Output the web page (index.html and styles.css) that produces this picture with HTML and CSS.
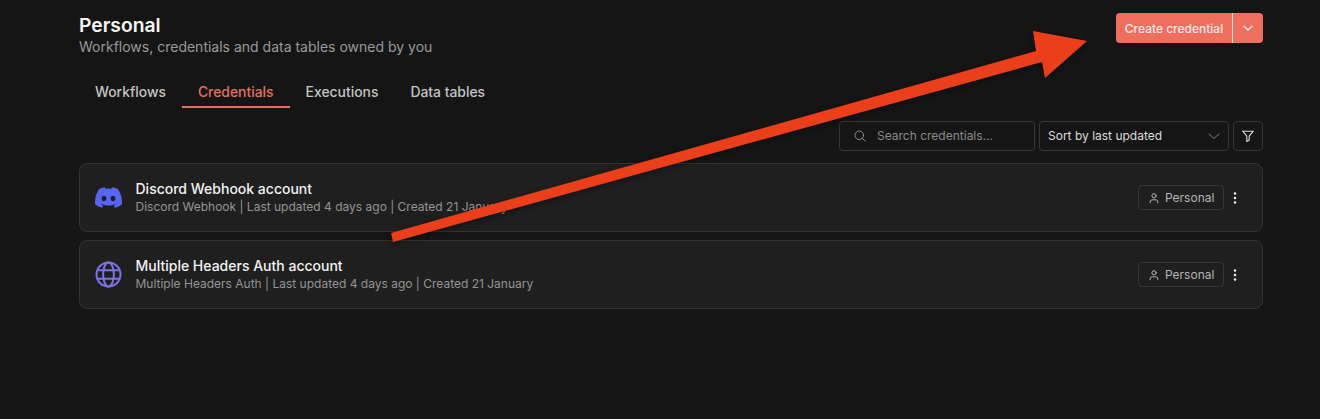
FILE: index.html
```html
<!DOCTYPE html>
<html lang="en">
<head>
<meta charset="utf-8">
<title>Personal - Credentials</title>
<link rel="stylesheet" href="styles.css">
</head>
<body>
<main class="page">
  <header class="head">
    <div class="head-text">
      <h1 class="title">Personal</h1>
      <p class="subtitle">Workflows, credentials and data tables owned by you</p>
    </div>
    <div class="split">
      <button class="split-main">Create credential</button>
      <button class="split-more" aria-label="More">
        <svg width="14" height="14" viewBox="0 0 14 14" fill="none" stroke="currentColor" stroke-width="1.2" stroke-linecap="round" stroke-linejoin="round"><path d="M3 5.2 7 9 11 5.2"/></svg>
      </button>
    </div>
  </header>
  <nav class="tabs">
    <a class="tab">Workflows</a>
    <a class="tab tab-active">Credentials</a>
    <a class="tab">Executions</a>
    <a class="tab">Data tables</a>
  </nav>
  <div class="toolbar">
    <label class="search">
      <svg width="14" height="14" viewBox="0 0 14 14" fill="none" stroke="currentColor" stroke-width="1" stroke-linecap="round"><circle cx="6.3" cy="6.3" r="4.3"/><path d="M9.5 9.5 12.2 12.2"/></svg>
      <span>Search credentials...</span>
    </label>
    <div class="select">
      <span>Sort by last updated</span>
      <svg width="14" height="14" viewBox="0 0 14 14" fill="none" stroke="currentColor" stroke-width="1" stroke-linecap="round" stroke-linejoin="round"><path d="M2 5 7 9.5 12 5"/></svg>
    </div>
    <button class="filter" aria-label="Filter">
      <svg width="14" height="14" viewBox="0 0 14 14" fill="none" stroke="currentColor" stroke-width="1.1" stroke-linejoin="round"><path d="M1.7 2.2H12.3L8.2 7.2V11L5.8 12.4V7.2Z"/></svg>
    </button>
  </div>
  <section class="list">
    <article class="card">
      <svg class="card-icon" width="27" height="27" viewBox="0 0 24 24" fill="#5865f2"><path d="M20.32 4.37a19.8 19.8 0 0 0-4.89-1.52.07.07 0 0 0-.08.04c-.21.38-.45.87-.61 1.26a18.3 18.3 0 0 0-5.49 0 12.6 12.6 0 0 0-.62-1.26.08.08 0 0 0-.08-.04 19.7 19.7 0 0 0-4.89 1.52.07.07 0 0 0-.03.03C.53 9.05-.32 13.58.1 18.06c0 .02.01.04.03.06a19.9 19.9 0 0 0 6 3.03.08.08 0 0 0 .08-.03c.46-.63.87-1.29 1.23-1.99a.08.08 0 0 0-.04-.11 13.1 13.1 0 0 1-1.87-.89.08.08 0 0 1-.01-.13l.37-.29a.07.07 0 0 1 .08-.01c3.93 1.79 8.18 1.79 12.06 0a.07.07 0 0 1 .08.01l.37.29a.08.08 0 0 1-.01.13c-.6.35-1.22.64-1.87.89a.08.08 0 0 0-.04.11c.36.7.78 1.36 1.23 1.99a.08.08 0 0 0 .08.03 19.8 19.8 0 0 0 6-3.03.08.08 0 0 0 .03-.05c.5-5.18-.84-9.68-3.55-13.66a.06.06 0 0 0-.03-.03ZM8.02 15.33c-1.18 0-2.16-1.09-2.16-2.42s.96-2.42 2.16-2.42c1.21 0 2.18 1.1 2.16 2.42 0 1.33-.96 2.42-2.16 2.42Zm7.97 0c-1.18 0-2.16-1.09-2.16-2.42s.96-2.42 2.16-2.42c1.21 0 2.18 1.1 2.16 2.42 0 1.33-.95 2.42-2.16 2.42Z"/></svg>
      <div class="card-text">
        <h2 class="card-title">Discord Webhook account</h2>
        <p class="card-meta">Discord Webhook | Last updated 4 days ago | Created 21 January</p>
      </div>
      <span class="badge">
        <svg width="12" height="12" viewBox="0 0 12 12" fill="none" stroke="currentColor" stroke-width="1" stroke-linecap="round"><circle cx="6" cy="3.8" r="2.1"/><path d="M2.2 10.8V9.8A2 2 0 0 1 4.2 7.8H7.8A2 2 0 0 1 9.8 9.8V10.8"/></svg>
        Personal
      </span>
      <svg class="kebab" width="4" height="12" viewBox="0 0 4 12" fill="currentColor"><circle cx="2" cy="1.5" r="1.25"/><circle cx="2" cy="6" r="1.25"/><circle cx="2" cy="10.5" r="1.25"/></svg>
    </article>
    <article class="card">
      <svg class="card-icon" width="27" height="27" viewBox="0 0 27 27" fill="none" stroke="#7d72e6" stroke-width="2"><circle cx="13.5" cy="13.5" r="12"/><ellipse cx="13.5" cy="13.5" rx="5.4" ry="12"/><path d="M2.6 9.3H24.4M2.6 17.7H24.4"/></svg>
      <div class="card-text">
        <h2 class="card-title">Multiple Headers Auth account</h2>
        <p class="card-meta">Multiple Headers Auth | Last updated 4 days ago | Created 21 January</p>
      </div>
      <span class="badge">
        <svg width="12" height="12" viewBox="0 0 12 12" fill="none" stroke="currentColor" stroke-width="1" stroke-linecap="round"><circle cx="6" cy="3.8" r="2.1"/><path d="M2.2 10.8V9.8A2 2 0 0 1 4.2 7.8H7.8A2 2 0 0 1 9.8 9.8V10.8"/></svg>
        Personal
      </span>
      <svg class="kebab" width="4" height="12" viewBox="0 0 4 12" fill="currentColor"><circle cx="2" cy="1.5" r="1.25"/><circle cx="2" cy="6" r="1.25"/><circle cx="2" cy="10.5" r="1.25"/></svg>
    </article>
  </section>
</main>
<svg class="arrow" width="1320" height="419" viewBox="0 0 1320 419" aria-hidden="true"><path d="M391 233 1036 51 1033 31 1087 41 1045 78 1042 62 393 242Z" fill="#ea3f1a"/></svg>
</body>
</html>
```
FILE: styles.css
```css
* { box-sizing: border-box; }
html, body { margin: 0; height: 100%; }
body {
  background: #151515;
  font-family: Inter, "Liberation Sans", sans-serif;
  color: #f2f2f2;
  overflow: hidden;
  position: relative;
}
button { font: inherit; color: inherit; cursor: pointer; }
.page { width: 1184px; margin-left: 79px; display: flex; flex-direction: column; }
.head { display: flex; justify-content: space-between; align-items: flex-start; padding-top: 13px; height: 70px; }
.title { margin: 0; font-size: 19.3px; line-height: 24px; font-weight: 600; color: #f5f5f5; }
.subtitle { margin: 0; padding-top: 1px; font-size: 14px; line-height: 18px; color: #9a9a9a; }
.split { display: flex; height: 30px; border-radius: 4px; overflow: hidden; background: #ef6f5e; color: #fff; }
.split-main { width: 116px; padding: 0; border: 0; background: none; font-size: 12px; font-weight: 500; color: #fbe9e6; }
.split-more { width: 31px; padding: 0; border: 0; border-left: 1px solid #fbd9d3; background: none; display: flex; align-items: center; justify-content: center; }
.tabs { display: flex; height: 38px; }
.tab { padding: 0 16px; font-size: 13.9px; font-weight: 500; line-height: 44px; color: #c4c4c4; height: 38px; }
.tab-active { color: #e5705f; border-bottom: 2px solid #e5705f; }
.toolbar { display: flex; justify-content: flex-end; gap: 4px; margin-top: 13px; height: 30px; }
.search, .select, .filter { border: 1px solid #363636; border-radius: 4px; background: none; display: flex; align-items: center; font-size: 12px; }
.search { width: 196px; padding: 0 0 1px 13px; gap: 10px; color: #8a8a8a; }
.select { width: 190px; padding: 0 7px 1px 8px; justify-content: space-between; color: #dcdcdc; }
.select svg { color: #7d7d7d; }
.filter { width: 30px; padding: 0; justify-content: center; color: #dcdcdc; }
.list { display: flex; flex-direction: column; gap: 8px; margin-top: 12px; }
.card { height: 69px; display: flex; align-items: center; padding: 0 25px 0 15px; background: #1f1f1f; border: 1px solid #343434; border-radius: 8px; }
.card-icon { flex: none; margin-right: 13.5px; }
.card-text { flex: 1; }
.card-title { margin: 0; font-size: 14px; line-height: 18px; font-weight: 500; color: #f2f2f2; }
.card-meta { margin: 0; font-size: 12px; line-height: 17px; color: #959595; }
.badge { display: flex; align-items: center; gap: 5px; height: 25px; width: 86px; padding-left: 9px; border: 1px solid #363636; border-radius: 4px; font-size: 12px; color: #b5b5b5; margin-right: 9px; }
.kebab { flex: none; color: #f0f0f0; }
.arrow { position: absolute; top: 0; left: 0; pointer-events: none; filter: drop-shadow(0 2px 3px rgba(0,0,0,.4)); }
```
